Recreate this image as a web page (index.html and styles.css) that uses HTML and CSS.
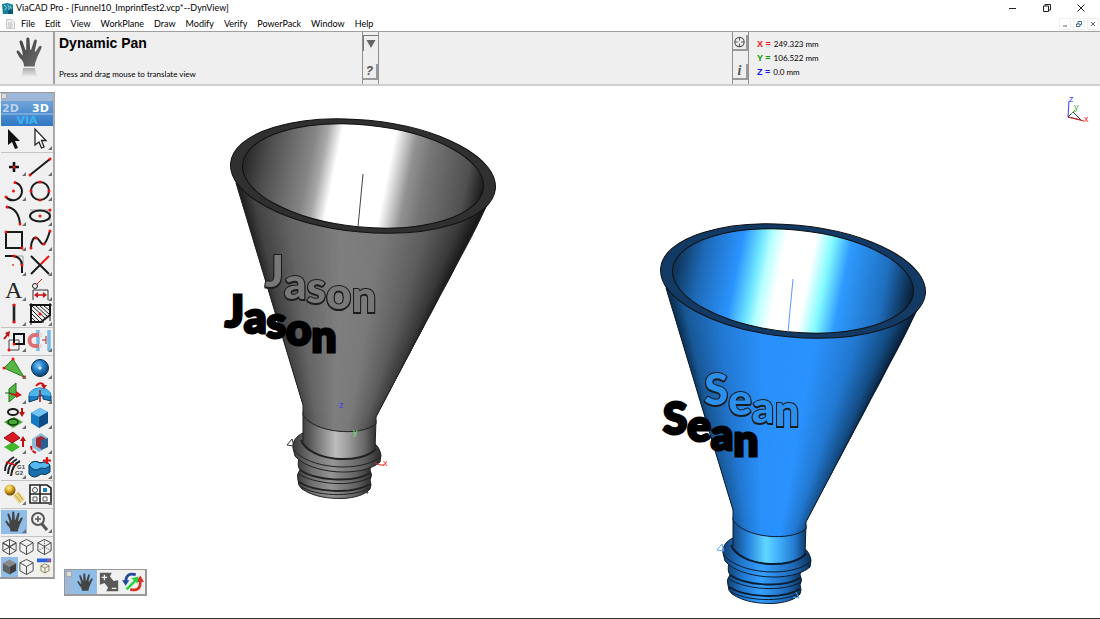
FILE: index.html
```html
<!DOCTYPE html>
<html lang="en">
<head>
<meta charset="utf-8">
<title>ViaCAD Pro</title>
<link rel="stylesheet" href="styles.css">
</head>
<body>
<svg class="defs" width="0" height="0" aria-hidden="true">
  <defs>
    <linearGradient id="logoFill" x1="0" y1="0" x2="0" y2="1"><stop offset="0" stop-color="#6fa3d8"/><stop offset="1" stop-color="#2f77c4"/></linearGradient>
    <linearGradient id="handFill" x1="0" y1="0" x2="1" y2="1"><stop offset="0" stop-color="#3c3c3c"/><stop offset="1" stop-color="#707070"/></linearGradient>
    <linearGradient id="fadeFill" x1="0" y1="0" x2="0" y2="1"><stop offset="0" stop-color="#aaa"/><stop offset="1" stop-color="#efefef"/></linearGradient>
    <radialGradient id="sphereFill" cx=".4" cy=".35" r=".7"><stop offset="0" stop-color="#7cc4f5"/><stop offset=".45" stop-color="#2380c8"/><stop offset="1" stop-color="#0a3560"/></radialGradient>
    <radialGradient id="goldFill" cx=".4" cy=".3" r=".7"><stop offset="0" stop-color="#fff3a0"/><stop offset=".5" stop-color="#dba520"/><stop offset="1" stop-color="#6b4300"/></radialGradient>
    <symbol id="hand" viewBox="0 0 26 30"><path d="M8 29.500C8 25 6 23 3.500 20.500L.8 15.600C0 13.500 2 12.800 3.300 14.500L6.500 18.500C7 18 6.500 16 6.200 14L3.600 5.600C3.100 3.200 5.800 2.600 6.500 4.800L9.600 13.200L10.200 12.900L10.300 2.400C10.400 0 13.300 0 13.500 2.400L14.200 12.700L15 12.900L18.100 3.600C18.900 1.500 21.300 2.300 20.800 4.500L18.800 14.300L19.400 14.900L23 9.500C24.300 7.800 26.400 9 25.500 11L21.500 19.500C20.500 23 19 25 18.700 29.500Z"/></symbol>
    <symbol id="corner" viewBox="0 0 4 4"><path d="M4 0V4H0Z" fill="#6d6d6d"/></symbol>
    <symbol id="cube" viewBox="0 0 18 18"><path d="M9 1L16 4.500V13L9 17L2 13V4.500ZM2 4.500L9 8.500L16 4.500M9 8.500V17"/></symbol>
  </defs>
</svg>
<div class="app">
  <header class="titlebar">
    <svg class="app-icon" viewBox="0 0 12 12"><path d="M0 1L6 0L12 2V12H1Z" fill="#187f9b"/><path d="M2 2L5 5L3 8M6 2L8 5L7 9M9 3L10 6" stroke="#a5e1ee" stroke-width="1" fill="none"/><path d="M6 8L12 7V12H7Z" fill="#0a566e"/></svg>
    <h1 class="app-title">ViaCAD Pro - [Funnel10_ImprintTest2.vcp*--DynView]</h1>
    <div class="window-controls">
      <button aria-label="Minimize"><svg viewBox="0 0 10 10"><path d="M1 5.500H8"/></svg></button>
      <button aria-label="Restore"><svg viewBox="0 0 10 10"><path d="M1.500 3H6.500V8.500H1.500ZM3 3V1.500H8.500V7H6.500"/></svg></button>
      <button aria-label="Close"><svg viewBox="0 0 10 10"><path d="M1.500 1.500L8.500 8.500M8.500 1.500L1.500 8.500"/></svg></button>
    </div>
  </header>
  <nav class="menubar" aria-label="Main menu">
    <svg class="doc-icon" viewBox="0 0 9 10"><path d="M.5.5H6L8.500 3V9.500H.5Z" fill="#eee" stroke="#c9c9c9"/><path d="M2 4H6M2 6H7M2 8H6" stroke="#bbb"/></svg>
    <button>File</button><button>Edit</button><button>View</button><button>WorkPlane</button><button>Draw</button><button>Modify</button><button>Verify</button><button>PowerPack</button><button>Window</button><button>Help</button>
    <div class="doc-controls">
      <button aria-label="Minimize document"><svg viewBox="0 0 8 8"><path d="M2 6H6"/></svg></button>
      <button aria-label="Restore document"><svg viewBox="0 0 8 8"><path d="M1.500 4H5V6.500H1.500ZM3 4V1.500H6.500V4.500H5"/></svg></button>
      <button aria-label="Close document"><svg viewBox="0 0 8 8"><path d="M2 2L6 6M6 2L2 6"/></svg></button>
    </div>
  </nav>
  <section class="ribbon" aria-label="Tool status">
    <div class="tool-picture">
      <svg viewBox="0 0 26 42"><use href="#hand" width="26" height="30" fill="url(#handFill)"/><path d="M7 31H19C19 35 21 37 22 40H4C6 37 7 35 7 31Z" fill="url(#fadeFill)"/></svg>
    </div>
    <div class="tool-info">
      <h2>Dynamic Pan</h2>
      <p>Press and drag mouse to translate view</p>
    </div>
    <div class="strip">
      <button aria-label="Expand" class="sunk"><svg viewBox="0 0 14 14"><path d="M2.500 3H11.500L7 11Z" fill="#666"/></svg></button>
      <button class="glyph">?</button>
    </div>
    <div class="spare"></div>
    <div class="strip">
      <button aria-label="Snap"><svg viewBox="0 0 14 14"><circle cx="7" cy="7" r="5" fill="none" stroke="#555" stroke-width="1.200"/><path d="M7 2V5.500M7 8.500V12M2 7H5.500M8.500 7H12" stroke="#555"/></svg></button>
      <button class="glyph serif">i</button>
    </div>
    <dl class="coords">
      <div><dt class="red">X =</dt><dd>249.323 mm</dd></div>
      <div><dt class="green">Y =</dt><dd>106.522 mm</dd></div>
      <div><dt class="blue">Z =</dt><dd>0.0 mm</dd></div>
    </dl>
  </section>

  <main class="viewport">
    <svg class="scene" viewBox="0 86 1100 532" role="img" aria-label="Two funnels">
      <defs>
        <linearGradient id="grayInner" gradientUnits="userSpaceOnUse" x1="246" y1="165" x2="484" y2="189"><stop offset="0" stop-color="#2b2b2b"/><stop offset=".08" stop-color="#4c4c4c"/><stop offset=".26" stop-color="#858585"/><stop offset=".31" stop-color="#a8a8a8"/><stop offset=".37" stop-color="#fff"/><stop offset=".59" stop-color="#fff"/><stop offset=".68" stop-color="#929292"/><stop offset=".75" stop-color="#757575"/><stop offset=".92" stop-color="#505050"/><stop offset="1" stop-color="#161616"/></linearGradient>
        <linearGradient id="blueInner" gradientUnits="userSpaceOnUse" x1="246" y1="165" x2="484" y2="189"><stop offset="0" stop-color="#10365c"/><stop offset=".1" stop-color="#1d68b4"/><stop offset=".25" stop-color="#2b93ff"/><stop offset=".33" stop-color="#70e8ff"/><stop offset=".37" stop-color="#b8ffff"/><stop offset=".43" stop-color="#fff"/><stop offset=".55" stop-color="#fff"/><stop offset=".62" stop-color="#84fbff"/><stop offset=".7" stop-color="#2e9aff"/><stop offset=".87" stop-color="#1f6fbf"/><stop offset="1" stop-color="#081b30"/></linearGradient>
        <linearGradient id="grayNeck"><stop offset="0" stop-color="#404040"/><stop offset=".2" stop-color="#777"/><stop offset=".45" stop-color="#bdbdbd"/><stop offset=".6" stop-color="#a0a0a0"/><stop offset=".85" stop-color="#666"/><stop offset="1" stop-color="#303030"/></linearGradient>
        <linearGradient id="blueNeck"><stop offset="0" stop-color="#164a80"/><stop offset=".2" stop-color="#2582dd"/><stop offset=".45" stop-color="#5fd6ff"/><stop offset=".6" stop-color="#45b5ff"/><stop offset=".85" stop-color="#2279cf"/><stop offset="1" stop-color="#103a66"/></linearGradient>
        <linearGradient id="grayRing"><stop offset="0" stop-color="#3a3a3a"/><stop offset=".2" stop-color="#707070"/><stop offset=".45" stop-color="#949494"/><stop offset=".8" stop-color="#606060"/><stop offset="1" stop-color="#2c2c2c"/></linearGradient>
        <linearGradient id="blueRing"><stop offset="0" stop-color="#124070"/><stop offset=".2" stop-color="#2076cc"/><stop offset=".45" stop-color="#35a0ff"/><stop offset=".8" stop-color="#1e69b8"/><stop offset="1" stop-color="#0d3056"/></linearGradient>
        <clipPath id="coneClip"><path d="M231 170L236 183L303 405V415C314 433 360 437 376 424V417L492 199L495 186Z"/></clipPath>
        <g id="funnelBase">
          <path class="ring-fill edge" d="M299 458Q297 466 300 470Q296 474 298 480Q298 486 302 489C314 497 328 498.500 342 498.500C356 498 366 494 370 489Q372 485 370 480Q373 475 370 470L372 460Z"/>
          <path class="groove" d="M300 470C314 480 352 484 370 473M299 482C314 492 352 495 370 484"/>
          <path class="line" d="M299 474C314 484 352 488 371 477M300 486C314 496 352 498 370 488"/>
          <path class="ring-fill edge" d="M303 433C296 436 292 442 293 448L295 456C310 474 362 478 380 462L381 455C380 450 378 446 374 443Z"/>
          <path class="line" d="M293 449C308 470 364 473 381 456"/>
          <path class="neck-fill" d="M303 412V441C312 461 358 464 375 450L376 420Z"/>
          <path class="groove" d="M301 440C310 462 360 465 376 449"/>
          <path class="line" d="M303 412V441M375 449L376 420"/>
        </g>
        <g id="funnelRim">
          <path class="line" d="M236 183L303 405V415C314 433 360 437 376 424V417L490 199"/>
          <ellipse class="rim" cx="363" cy="176" rx="133" ry="56" transform="rotate(5.600 363 176)"/>
          <ellipse class="inner" cx="363" cy="176" rx="121" ry="51" transform="rotate(5.600 363 176)"/>
          <path class="axis" d="M363 174L358 227"/>
        </g>
      </defs>
      <g class="funnel gray">
        <use href="#funnelBase"/>
        <g class="cone" clip-path="url(#coneClip)" data-shades="0:26,26,26;.06:66,66,66;.2:100,100,100;.42:126,126,126;.6:122,122,122;.8:92,92,92;.93:56,56,56;1:20,20,20"></g>
        <use href="#funnelRim"/>
      </g>
      <g class="funnel azure" transform="translate(430 105)">
        <use href="#funnelBase"/>
        <g class="cone" clip-path="url(#coneClip)" data-shades="0:10,38,66;.06:24,88,150;.2:34,120,210;.38:42,144,250;.62:42,146,254;.8:34,120,208;.93:20,76,132;1:8,30,54"></g>
        <use href="#funnelRim"/>
      </g>
      <text class="imprint gray-text" x="265" y="287 299 303 309 312">Jason</text>
      <text class="label" x="225" y="327 333 338 345 352">Jason</text>
      <text class="imprint blue-text" x="704" y="405 415 423 426">Sean</text>
      <text class="label" x="663" y="434 441 450 456">Sean</text>
      <path class="mark dark" d="M287 445L292 439L294 446ZM363 492L368 493L366 487"/>
      <path class="mark sky" d="M717 550L722 544L724 551ZM793 597L799 598L796 592"/>
      <path class="mark crimson" d="M375 463L380 465H384"/>
      <text class="axis-name" x="339" y="408" fill="#3a3aff">z</text>
      <text class="axis-name" x="353" y="435" fill="#6fe86f">y</text>
      <text class="axis-name" x="383" y="466" fill="#f22">x</text>
      <path class="mark navy" d="M1068 117L1069 101"/>
      <path class="mark dark" d="M1068 117L1073 112L1081 120Z"/>
      <path class="mark crimson" d="M1068 117L1084 121"/>
      <path class="mark leaf" d="M1071 114L1075 110"/>
      <text class="axis-name" x="1069" y="102" fill="#3a3aff">z</text>
      <text class="axis-name" x="1074" y="110" fill="#3fae3f">y</text>
      <text class="axis-name" x="1084" y="122" fill="#f22">x</text>
    </svg>

    <aside class="palette" aria-label="Tools">
      <div class="grip"><i></i></div>
      <div class="logo">
        <svg viewBox="0 0 52 25"><rect width="52" height="25" fill="url(#logoFill)"/><path d="M0 13H52" stroke="#9fc4ea"/><text class="logo-dim" x="1" y="11">2D</text><text class="logo-bright" x="31" y="11">3D</text><text class="logo-via" x="26" y="23">VIA</text></svg>
      </div>
      <div class="tools select">
        <button aria-label="Select"><svg viewBox="0 0 26 24"><path d="M7 2V18L11 15L14 22L17 21L14 14H19Z" fill="#111"/></svg></button>
        <button aria-label="Deep select"><svg viewBox="0 0 26 24"><path d="M8 2V18L12 15L14.500 21L17 20L14.500 13.500H19Z" fill="#fff" stroke="#222" stroke-width="1.300"/><use href="#corner" x="21" y="19" width="4" height="4"/></svg></button>
      </div>
      <div class="tools">
        <button aria-label="Point"><svg viewBox="0 0 26 24"><path d="M13 9V19M8 14H18" stroke="#111" stroke-width="2.600"/><circle cx="13" cy="14" r="1.500" fill="#e11"/><use href="#corner" x="21" y="19" width="4" height="4"/></svg></button>
        <button aria-label="Line"><svg viewBox="0 0 26 24"><path d="M3 22L23 6" class="ink"/><path class="dots" d="M3 22h0M23 6h0"/><use href="#corner" x="21" y="19" width="4" height="4"/></svg></button>
        <button aria-label="Arc"><svg viewBox="0 0 26 24"><path d="M14 4.500A9 9 0 1 1 5 19" class="ink"/><path class="dots" d="M14 4.500h0M5 19h0M12.500 13h0"/><use href="#corner" x="21" y="19" width="4" height="4"/></svg></button>
        <button aria-label="Circle"><svg viewBox="0 0 26 24"><circle cx="13" cy="13" r="9" class="ink"/><path class="dots" d="M13 4h0M13 22h0M4 13h0M22 13h0"/><use href="#corner" x="21" y="19" width="4" height="4"/></svg></button>
        <button aria-label="Conic"><svg viewBox="0 0 26 24"><path d="M6 4C14 5 18 11 19 21" class="ink"/><path class="dots" d="M6 4h0M19 21h0"/><use href="#corner" x="21" y="19" width="4" height="4"/></svg></button>
        <button aria-label="Ellipse"><svg viewBox="0 0 26 24"><path d="M3 7H23V18" stroke="#999" fill="none"/><ellipse cx="13" cy="13" rx="10" ry="5.500" class="ink"/><path class="dots" d="M13 13h0M23 7h0"/><use href="#corner" x="21" y="19" width="4" height="4"/></svg></button>
        <button aria-label="Rectangle"><svg viewBox="0 0 26 24"><path d="M5 4H21V20H5Z" class="ink"/><path class="dots" d="M5 4h0M21 20h0"/><use href="#corner" x="21" y="19" width="4" height="4"/></svg></button>
        <button aria-label="Spline"><svg viewBox="0 0 26 24"><path d="M4 20C4 13 7 8 10 10S15 19 18 15S21 8 23 3" class="ink"/><path class="dots" d="M4 20h0M9 10h0M17 16h0M23 3h0"/><use href="#corner" x="21" y="19" width="4" height="4"/></svg></button>
        <button aria-label="Fillet"><svg viewBox="0 0 26 24"><path d="M14 3H22V11" stroke="#999" fill="none"/><path d="M4 3H12Q21 4 21 13V20" class="ink"/><path class="dots" d="M13 3h0M21 12h0"/><path d="M11 12H13" stroke="#e66" stroke-width="2"/><use href="#corner" x="21" y="19" width="4" height="4"/></svg></button>
        <button aria-label="Trim"><svg viewBox="0 0 26 24"><path d="M4 3L22 21M4 21L14 11" class="ink"/><path d="M14 11L22 3" stroke="#e11" stroke-width="2"/><use href="#corner" x="21" y="19" width="4" height="4"/></svg></button>
        <button aria-label="Text"><svg viewBox="0 0 26 24"><text class="big-a" x="4" y="20">A</text><use href="#corner" x="21" y="19" width="4" height="4"/></svg></button>
        <button aria-label="Dimension"><svg viewBox="0 0 26 24"><circle cx="8" cy="8" r="2.500" fill="none" stroke="#222"/><path d="M10 6L15 1" stroke="#e11"/><path d="M6 12V22M21 12V22M6 12H21" stroke="#333" fill="none"/><path d="M9 17H18" stroke="#c11" stroke-width="1.500"/><path d="M7 17L11 14V20ZM20 17L16 14V20Z" fill="#c11"/><use href="#corner" x="21" y="19" width="4" height="4"/></svg></button>
        <button aria-label="Thickness"><svg viewBox="0 0 26 24"><path d="M13 1V20" stroke="#222" stroke-width="2.600"/><path class="dots" d="M13 2h0M13 19h0"/><use href="#corner" x="21" y="19" width="4" height="4"/></svg></button>
        <button aria-label="Hatch"><svg viewBox="0 0 26 24"><path d="M4 2H23V12L14 19H4Z" class="ink"/><path d="M5 3L19 16M5 7L16 18M5 11L12 18M5 15L8 18M9 3L21 14M13 3L22 11M17 3L22 7" stroke="#222"/><path d="M2 2H25M4 0V22M23 0V18M2 19H17" stroke="#111"/><path class="dots" d="M13 11h0"/><use href="#corner" x="21" y="19" width="4" height="4"/></svg></button>
      </div>
      <div class="tools single">
        <button aria-label="Transform"><svg viewBox="0 0 26 24"><path d="M8 11H18V21H8Z" fill="none" stroke="#444"/><path d="M13 5H23V15H13Z" fill="none" stroke="#111" stroke-width="2"/><path d="M3 10L7 5" stroke="#b11" stroke-width="2"/><path d="M4 4L9 2L8 8Z" fill="#b11"/><path class="dots" d="M8 21h0M13 15h0"/><use href="#corner" x="21" y="19" width="4" height="4"/></svg></button>
        <button aria-label="Snap magnet"><svg viewBox="0 0 26 24"><path d="M11 1V22M22 1V22" stroke="#78bce8" stroke-width="3.500"/><path d="M14 6H8A5.500 5.500 0 0 0 8 17H14" fill="none" stroke="#dc7077" stroke-width="4"/><path d="M12 6H15M12 17H15" stroke="#ddd" stroke-width="4"/><path d="M15 11H19M19 7V15" stroke="#a22"/><use href="#corner" x="21" y="19" width="4" height="4"/></svg></button>
      </div>
      <div class="tools">
        <button aria-label="Surface"><svg viewBox="0 0 26 24"><path d="M12 3L3 12L23 21Z" fill="#56b544" stroke="#297d20"/><path class="dots" d="M12 3h0M3 12h0M23 21h0"/><use href="#corner" x="21" y="19" width="4" height="4"/></svg></button>
        <button aria-label="Sphere"><svg viewBox="0 0 26 24"><circle cx="13" cy="12" r="8.500" fill="url(#sphereFill)" stroke="#082c50"/><circle cx="13" cy="12" r="1.500" fill="#e3f5ff"/><use href="#corner" x="21" y="19" width="4" height="4"/></svg></button>
        <button aria-label="Sweep surface"><svg viewBox="0 0 26 24"><path d="M8 8L15 2V15L8 21Z" fill="#52b544" stroke="#247218"/><path d="M4 12H10M9 12L15 14" stroke="#235f18"/><path d="M10 12L15 13V10L21 14L15 17V15L10 14Z" fill="#c71c1c"/><use href="#corner" x="21" y="19" width="4" height="4"/></svg></button>
        <button aria-label="Revolve solid"><svg viewBox="0 0 26 24"><path d="M2 15A11 8 0 0 1 24 15V20L16 18V15H11V18L2 21Z" fill="#187fc5" stroke="#0b3b61"/><path d="M2 15A11 8 0 0 1 24 15L16 14Q13 12 11 15Z" fill="#49b5ec"/><path d="M13 9V21" stroke="#a11" stroke-width="1.500"/><path d="M9 5Q13 0 17 4" stroke="#c11" stroke-width="2" fill="none"/><path d="M14 4H20L17 8Z" fill="#c11"/><use href="#corner" x="21" y="19" width="4" height="4"/></svg></button>
        <button aria-label="Project curve"><svg viewBox="0 0 26 24"><path d="M3 16L13 11L22 16L12 22Z" fill="#4ba837"/><ellipse cx="12" cy="6" rx="5" ry="3" class="ink"/><ellipse cx="12" cy="16" rx="5" ry="3" fill="none" stroke="#123d0b" stroke-width="1.500"/><path d="M21 2V8" stroke="#b11" stroke-width="2"/><path d="M18 6H24L21 11Z" fill="#b11"/><use href="#corner" x="21" y="19" width="4" height="4"/></svg></button>
        <button aria-label="Block"><svg viewBox="0 0 26 24"><path d="M4 7L13 2L21 6V17L12 22L4 17Z" fill="#1679c4"/><path d="M4 7L13 2L21 6L12 11Z" fill="#70c3f2"/><path d="M12 11L21 6V17L12 22Z" fill="#0b4b86"/><use href="#corner" x="21" y="19" width="4" height="4"/></svg></button>
        <button aria-label="Offset surface"><svg viewBox="0 0 26 24"><path d="M3 16L12 11L19 16L11 21Z" fill="#42b62f"/><path d="M3 7L12 1L19 7L11 12Z" fill="#d91a24" stroke="#941018"/><path d="M22 16V9" stroke="#b11" stroke-width="2"/><path d="M19 10H25L22 5Z" fill="#b11"/><use href="#corner" x="21" y="19" width="4" height="4"/></svg></button>
        <button aria-label="Edit solid"><svg viewBox="0 0 26 24"><path d="M5 8L14 2L21 7V16L12 21L5 16Z" fill="#8fb9d8"/><path d="M9 7L14 5L18 7V15L14 18L9 15Z" fill="#a42634"/><path d="M14 9L21 7V16L14 19Z" fill="#295f91"/><path d="M4 15Q4 20 9 22" stroke="#d11" stroke-width="2" fill="none" stroke-dasharray="4 1"/><use href="#corner" x="21" y="19" width="4" height="4"/></svg></button>
        <button aria-label="Continuity"><svg viewBox="0 0 26 24"><path d="M13 1Q4 6 4 15M16 3Q7 8 7 18M19 5Q11 9 10 20" fill="none" stroke="#222" stroke-width="2"/><path d="M5 6L14 9" stroke="#e11" stroke-width="1.500"/><text class="g-text" x="16" y="13">G1</text><text class="g-text" x="14" y="19">G2</text><use href="#corner" x="21" y="19" width="4" height="4"/></svg></button>
        <button aria-label="Boolean add"><svg viewBox="0 0 26 24"><path d="M2 9Q7 3 13 7Q21 4 23 10V16Q19 20 14 18Q7 24 2 18Z" fill="#166fae" stroke="#093657"/><path d="M2 9Q7 3 13 7Q21 4 23 10Q18 14 14 12Q7 17 2 9Z" fill="#55b9ed" stroke="#093657"/><path d="M20 1V8M16 4.500H24" stroke="#d11" stroke-width="2.200"/><use href="#corner" x="21" y="19" width="4" height="4"/></svg></button>
      </div>
      <div class="tools single">
        <button aria-label="Render"><svg viewBox="0 0 26 24"><path d="M12 14L17 9L24 17L18 22Z" fill="#ead58a"/><path d="M14 13L20 20M17 11L22 18" stroke="#c3a144"/><circle cx="9" cy="8" r="5.500" fill="url(#goldFill)"/><use href="#corner" x="21" y="19" width="4" height="4"/></svg></button>
        <button aria-label="Drawing sheet"><svg viewBox="0 0 26 24"><path d="M3 3H20L24 6V21H3ZM13 3V21M3 12H24" fill="#fff" stroke="#222" stroke-width="1.600"/><circle cx="8" cy="8" r="2.500" fill="none" stroke="#444"/><path d="M6 15H10V19H6ZM16 15H20V19H16Z" fill="none" stroke="#555"/><path d="M16 6H20V10H16Z" fill="#187ec3"/><use href="#corner" x="21" y="19" width="4" height="4"/></svg></button>
      </div>
      <div class="tools single">
        <button aria-label="Pan" class="on"><svg viewBox="0 0 26 24"><use href="#hand" x="4" y="1" width="18" height="21" fill="#444"/><use href="#corner" x="21" y="19" width="4" height="4"/></svg></button>
        <button aria-label="Zoom"><svg viewBox="0 0 26 24"><circle cx="11" cy="9" r="6" fill="none" stroke="#555" stroke-width="2"/><path d="M11 6V12M8 9H14" stroke="#555" stroke-width="1.500"/><path d="M15 14L20 20" stroke="#555" stroke-width="3"/><use href="#corner" x="21" y="19" width="4" height="4"/></svg></button>
      </div>
      <div class="views">
        <button aria-label="Wireframe"><svg viewBox="0 0 18 18"><use href="#cube" class="wire"/><path d="M9 1V9L2 13M9 9L16 13M2 5L9 9L16 5" class="wire"/></svg></button>
        <button aria-label="Hidden line"><svg viewBox="0 0 18 18"><use href="#cube" class="wire"/></svg></button>
        <button aria-label="Dashed hidden"><svg viewBox="0 0 18 18"><use href="#cube" class="wire"/><path d="M9 1V9L2 13M9 9L16 13" class="wire dashed"/></svg></button>
        <button aria-label="Shaded" class="on"><svg viewBox="0 0 18 18"><path d="M9 1L16 5L9 9L2 5Z" fill="#888"/><path d="M2 5L9 9V17L2 13Z" fill="#606060"/><path d="M16 5L9 9V17L16 13Z" fill="#3e3e3e"/></svg></button>
        <button aria-label="Shaded outline"><svg viewBox="0 0 18 18"><use href="#cube" class="wire"/></svg></button>
        <button aria-label="View dialog"><svg viewBox="0 0 18 18"><path d="M2 2H16V17H2Z" fill="#f4efd9"/><path d="M1 0H16V4H1Z" fill="#2763df"/><path d="M12 1H15V3H12Z" fill="#e45151"/><use href="#cube" x="4" y="5" width="11" height="11" class="wire"/></svg></button>
      </div>
    </aside>

    <aside class="floater" aria-label="View tools">
      <div class="grip side"><i></i></div>
      <button aria-label="Pan view" class="on"><svg viewBox="0 0 24 24"><use href="#hand" x="3" y="2" width="18" height="20" fill="#444"/></svg></button>
      <button aria-label="Zoom view"><svg viewBox="0 0 24 24"><path d="M2 2H15L13 6L17 11L22 10V22H9L11 18L7 13L2 15Z" fill="#595959"/><path d="M4 7H10M7 4V10M15 19H20" stroke="#eee" stroke-width="1.500"/></svg></button>
      <button aria-label="Rotate view"><svg viewBox="0 0 24 24"><path d="M15 4Q5 1 4 11" stroke="#244b9b" stroke-width="3" fill="none"/><path d="M0 10H8L4 16Z" fill="#244b9b"/><path d="M9 20Q20 23 20 12" stroke="#d63526" stroke-width="3" fill="none"/><path d="M15 12L20 5L24 12Z" fill="#d63526"/><path d="M4 19L13 10L10 8L18 6L17 14L15 12L6 21Z" fill="#27d244"/></svg></button>
    </aside>
  </main>
</div>
<script src="shading.js"></script>
</body>
</html>
```

FILE: styles.css
```css
* { box-sizing: border-box; }
body { margin: 0; font-family: Lato, "Open Sans", sans-serif; color: #000; background: #fff; }
h1, h2, p, dl, dd { margin: 0; font-weight: normal; }
button { display: flex; align-items: center; justify-content: center; padding: 0; border: 0; background: none; color: inherit; font: inherit; }
button svg { display: block; fill: none; }
.defs { position: absolute; }
.app { display: flex; flex-direction: column; height: 100vh; overflow: hidden; }

.titlebar { display: flex; align-items: center; height: 16px; padding-left: 2px; gap: 3px; }
.app-icon { width: 11px; height: 11px; }
.app-title { font-size: 9px; line-height: 16px; white-space: nowrap; }
.window-controls { display: flex; margin-left: auto; padding-right: 2px; }
.window-controls button { width: 34px; height: 16px; }
.window-controls svg { width: 10px; height: 10px; stroke: #222; }

.menubar { display: flex; align-items: center; height: 15px; padding-left: 6px; font-size: 9px; }
.menubar > button { height: 15px; padding: 0 5px; line-height: 15px; }
.doc-icon { width: 9px; height: 10px; margin-right: 1px; }
.doc-controls { display: flex; gap: 2px; margin-left: auto; padding-right: 1px; }
.doc-controls button { width: 12px; height: 12px; border: 1px solid #f0f0f0; }
.doc-controls svg { width: 8px; height: 8px; stroke: #53657c; }

.ribbon { display: flex; flex: none; height: 55px; border-top: 1px solid #a0a0a0; border-bottom: 2px solid #cfcfcf; background: #efefef; }
.tool-picture { display: flex; align-items: center; justify-content: center; width: 55px; padding-left: 4px; border-right: 2px solid #a0a0a0; }
.tool-picture svg { width: 26px; height: 42px; }
.tool-info { display: flex; flex-direction: column; justify-content: space-between; flex: 299 1 0; padding: 3px 4px 4px; }
.tool-info h2 { font: bold 14px/16px "Liberation Sans", Arial, sans-serif; color: #000; }
.tool-info p { font-size: 8px; line-height: 12px; color: #000; }
.strip { display: flex; flex-direction: column; justify-content: space-between; width: 17px; padding: 3px 0 4px; border: 1px solid #8f8f8f; border-width: 0 1px; }
.strip button { width: 15px; height: 16px; border-right: 2px solid #999; border-bottom: 2px solid #999; background: #eee; }
.strip .sunk { border: 0; border-left: 1px solid #777; border-top: 1px solid #777; }
.strip svg { width: 14px; height: 14px; }
.strip .glyph { font: italic bold 12px "Liberation Sans", Arial, sans-serif; color: #555; }
.strip .serif { font-family: "Liberation Serif", serif; font-size: 14px; }
.spare { flex: 353 1 0; }
.coords { flex: 335 1 0; padding: 5px 8px; font-size: 8px; }
.coords div { display: flex; gap: 3px; height: 14px; line-height: 15px; }
.coords dt { font: bold 9px/15px "Liberation Sans", Arial, sans-serif; }
.red { color: #f01515; }
.green { color: #0b980b; }
.blue { color: #1414f0; }

.viewport { position: relative; flex: 1; min-height: 0; border-bottom: 1px solid #333; background: #fff; }
.scene { display: block; width: 100%; height: 100%; }
.gray { --inner: url(#grayInner); --neck: url(#grayNeck); --ring: url(#grayRing); --rim: #303030; --axis: #444; --edge: #222; }
.azure { --inner: url(#blueInner); --neck: url(#blueNeck); --ring: url(#blueRing); --rim: #123a64; --axis: #559cff; --edge: #0b1d30; }
.neck-fill { fill: var(--neck); }
.ring-fill { fill: var(--ring); }
.edge { stroke: var(--edge); stroke-width: 1px; }
.line { fill: none; stroke: var(--edge); stroke-width: 1px; }
.groove { fill: none; stroke: var(--edge); stroke-width: 2px; }
.rim { fill: var(--rim); stroke: #111; }
.inner { fill: var(--inner); stroke: #111; stroke-width: 1px; }
.axis { fill: none; stroke: var(--axis); }
.label { font: 900 44px Lato, sans-serif; fill: #000; stroke: #000; stroke-width: 3px; }
.imprint { font: 900 44px Lato, sans-serif; stroke: #1c1c1c; stroke-width: 2px; paint-order: stroke; filter: drop-shadow(0 1px 0 #1c1c1c); }
.gray-text { fill: #777; }
.blue-text { fill: #2b8fee; }
.mark { fill: none; }
.dark { stroke: #333; }
.sky { stroke: #5ba4f5; }
.navy { stroke: #3a3aff; }
.crimson { stroke: #d22; }
.leaf { stroke: #3fae3f; }
.axis-name { font: 9px "Liberation Sans", Arial, sans-serif; }

.palette { position: absolute; left: 0; top: 6px; width: 55px; padding-left: 1px; border: 1px solid #999; border-right: 2px solid #aaa; border-bottom: 2px solid #999; border-left: 0; background: #f0f0f0; }
.grip { height: 8px; background: #9db8d9; }
.grip i { display: block; width: 6px; height: 6px; border: 1px solid #aaa; background: #ddd; }
.logo svg { display: block; width: 52px; height: 25px; }
.logo-dim, .logo-bright { font: bold 11px "DejaVu Sans", sans-serif; fill: #b9d3ee; }
.logo-bright { fill: #fff; }
.logo-via { font: bold 11px "DejaVu Sans", sans-serif; fill: #3bb2f1; text-anchor: middle; }
.tools { display: grid; grid-template-columns: 1fr 1fr; grid-auto-rows: 24px; gap: 1px 0; border-bottom: 1px solid #c4c4c4; }
.tools.select { padding: 1px 0; }
.tools.single { padding: 1px 0 2px; }
.tools svg { width: 26px; height: 24px; }
.on { background: #8fbde8; }
.ink { fill: none; stroke: #1a1a1a; stroke-width: 2px; }
.dots { fill: none; stroke: #e11; stroke-width: 3px; stroke-linecap: round; }
.big-a { font: 24px "Liberation Serif", serif; fill: #222; }
.g-text { font: bold 6px "Liberation Sans", sans-serif; fill: #444; }
.views { display: grid; grid-template-columns: 1fr 1fr 1fr; grid-auto-rows: 20px; }
.views svg { width: 17px; height: 18px; }
.wire { fill: none; stroke: #444; stroke-width: 1px; }
.dashed { stroke-dasharray: 1 1; }

.floater { position: absolute; left: 64px; bottom: 22px; display: flex; border: 1px solid #999; border-right-width: 2px; border-bottom-width: 2px; background: #f0f0f0; }
.floater button { width: 24px; height: 24px; }
.floater svg { width: 22px; height: 22px; }
.grip.side { width: 8px; height: 24px; padding: 1px; }
```

FILE: shading.js
```js
// Shades each cone with thin wedges that narrow from the rim to the neck.
const NS = 'http://www.w3.org/2000/svg';
const STEPS = 90;

function colourAt(stops, t) {
  let i = 1;
  while (i < stops.length - 1 && stops[i].at < t) i++;
  const a = stops[i - 1], b = stops[i];
  const k = (t - a.at) / (b.at - a.at);
  return 'rgb(' + a.rgb.map((v, n) => Math.round(v + (b.rgb[n] - v) * k)).join(',') + ')';
}

document.querySelectorAll('.cone').forEach(group => {
  const stops = group.dataset.shades.split(';').map(part => {
    const [at, rgb] = part.split(':');
    return { at: Number(at), rgb: rgb.split(',').map(Number) };
  });
  const top = t => (233 + 262 * t) + ' ' + (172 + 16 * t);
  const bottom = t => (303 + 74 * t) + ' ' + (436);
  for (let i = 0; i < STEPS; i++) {
    const a = i / STEPS, b = (i + 1) / STEPS;
    const wedge = document.createElementNS(NS, 'path');
    const colour = colourAt(stops, (a + b) / 2);
    wedge.setAttribute('d', `M${top(a)}L${top(b)}L${bottom(b)}L${bottom(a)}Z`);
    wedge.setAttribute('fill', colour);
    wedge.setAttribute('stroke', colour);
    group.appendChild(wedge);
  }
});
```
